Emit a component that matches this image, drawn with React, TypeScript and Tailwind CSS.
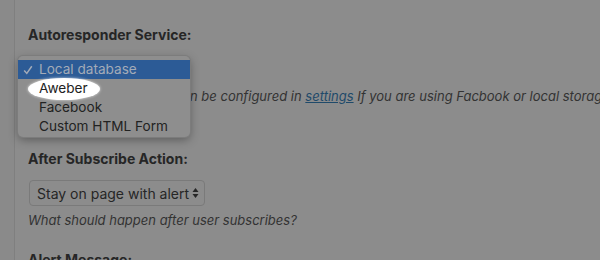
import React from "react";

function UpDownArrows() {
  return (
    <svg width="7" height="12" viewBox="0 0 7 12" className="shrink-0">
      <path d="M3.5 1 L6.5 5 L0.5 5 Z" fill="#262626" />
      <path d="M3.5 11 L6.5 7 L0.5 7 Z" fill="#262626" />
    </svg>
  );
}

function Check() {
  return (
    <svg width="10" height="10" viewBox="0 0 10 10" className="shrink-0">
      <path d="M1.2 5.4 L3.8 8.4 L8.8 1.2" fill="none" stroke="#a3abb8" strokeWidth="1.5" />
    </svg>
  );
}

const menuItems = ["Local database", "Aweber", "Facebook", "Custom HTML Form"];

export default function App() {
  return (
    <div
      className="relative flex h-[260px] w-[600px] overflow-hidden bg-[#8c8c8c] text-[#262626]"
      style={{ fontFamily: 'Inter, "Liberation Sans", Arial, sans-serif' }}
    >
      {/* admin side strip */}
      <div className="w-[15px] shrink-0 border-r border-[#7f7f7f] bg-[#8a8a8a]" />

      <div className="min-w-0 flex-1 pl-[13px] pt-[25px]">
        <h3 className="text-[14px] font-bold leading-[20px]">Autoresponder Service:</h3>

        <div className="mt-[10px] ml-[2px] h-[26px] w-[156px] rounded-[4px] border border-[#3c5f8c] bg-[#8c8c8c]" />

        <p className="mt-[6px] whitespace-nowrap text-[13px] italic leading-[18px] text-[#333]">
          <span className="inline-block w-[162px] overflow-hidden text-right align-top">Autoresponder services ca</span>
          n be configured in{" "}
          <a className="text-[#1f4a6a] underline">settings</a> If you are using Facbook or local storage
          <br />
          <span className="inline-block w-[160px] overflow-hidden text-right align-top">
            keep the form setup in <a className="text-[#1f4a6a] underline">this guide</a>
          </span>
          .
        </p>

        <h3 className="mt-[26px] text-[14px] font-bold leading-[20px]">After Subscribe Action:</h3>

        <div className="mt-[11px] ml-[1px] flex h-[26px] w-fit items-center gap-[3px] rounded-[4px] border border-[#7a7a7a] pl-[7px] pr-[5px] text-[14px]">
          <span>Stay on page with alert</span>
          <UpDownArrows />
        </div>

        <p className="mt-[5px] text-[13px] italic leading-[18px] text-[#333]">
          What should happen after user subscribes?
        </p>

        <h3 className="mt-[21px] text-[14px] font-bold leading-[20px]">Alert Message:</h3>
      </div>

      {/* open dropdown menu */}
      <div className="absolute left-[18px] top-[56px] w-[172px] rounded-[5px] bg-[#8e8e8e] pb-[1px] pt-[4px] shadow-[0_3px_10px_rgba(0,0,0,0.35)] ring-1 ring-[#7c7c7c]">
        {menuItems.map((item, i) => (
          <div
            key={item}
            className={
              i === 0
                ? "flex h-[19px] items-center gap-[6px] bg-[#2c5b96] pl-[5px] text-[13.6px] text-[#a3abb8]"
                : "relative flex h-[19px] items-center pl-[21px] text-[13.6px] text-[#222]"
            }
          >
            {i === 0 && <Check />}
            {i === 1 && (
              <span className="absolute left-[10px] top-[-1px] h-[22px] w-[72px] rounded-[50%] bg-white shadow-[0_0_3px_rgba(255,255,255,0.8)]" />
            )}
            <span className="relative">{item}</span>
          </div>
        ))}
      </div>
    </div>
  );
}
